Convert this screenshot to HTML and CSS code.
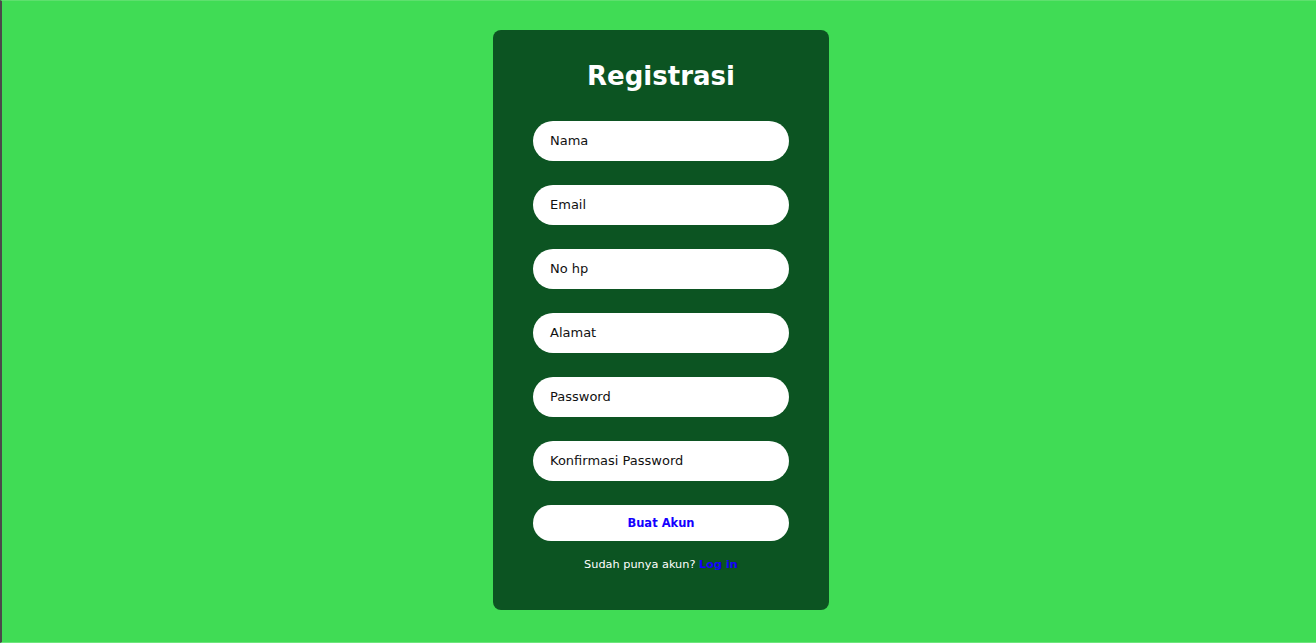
FILE: index.html
```html
<!DOCTYPE html>
<html lang="id">
<head>
<meta charset="utf-8">
<title>Registrasi</title>
<link rel="stylesheet" href="styles.css">
</head>
<body>
<main class="page">
  <section class="card">
    <h1 class="title">Registrasi</h1>
    <form class="form">
      <div class="field">Nama</div>
      <div class="field">Email</div>
      <div class="field">No hp</div>
      <div class="field">Alamat</div>
      <div class="field">Password</div>
      <div class="field">Konfirmasi Password</div>
      <button type="button" class="btn">Buat Akun</button>
    </form>
    <p class="footer">Sudah punya akun? <a class="link" href="#">Log in</a></p>
  </section>
</main>
</body>
</html>
```
FILE: styles.css
```css
html, body {
  margin: 0;
  padding: 0;
  height: 100%;
}
body {
  background: #40dc55;
  font-family: "DejaVu Sans", "Open Sans", sans-serif;
  box-sizing: border-box;
  border-left: 2px solid #4a4a4a;
  border-top: 1px solid #5ee06e;
  border-bottom: 1px solid #6ee67c;
  overflow: hidden;
}
.page {
  display: flex;
  justify-content: center;
  padding-top: 29px;
  padding-left: 4px;
}
.card {
  box-sizing: border-box;
  width: 336px;
  height: 580px;
  background: #0c5422;
  border-radius: 8px;
  padding: 23px 40px 0;
  display: flex;
  flex-direction: column;
}
.title {
  margin: 0;
  color: #ffffff;
  font-size: 26px;
  font-weight: 700;
  line-height: 46px;
  text-align: center;
}
.form {
  margin-top: 22px;
  display: flex;
  flex-direction: column;
  gap: 24px;
}
.field {
  box-sizing: border-box;
  height: 40px;
  background: #ffffff;
  border-radius: 20px;
  padding: 0 17px 2px;
  display: flex;
  align-items: center;
  font-size: 13px;
  color: #111111;
}
.btn {
  height: 36px;
  border: none;
  background: #ffffff;
  border-radius: 20px;
  color: #1400ff;
  font-family: inherit;
  font-size: 11.5px;
  font-weight: 700;
  padding: 0 0 1px;
  cursor: pointer;
}
.footer {
  margin: 15px 0 0;
  text-align: center;
  color: #ffffff;
  font-size: 11.3px;
  line-height: 18px;
}
.link {
  color: #1400ff;
  font-weight: 700;
  text-decoration: none;
}
```
